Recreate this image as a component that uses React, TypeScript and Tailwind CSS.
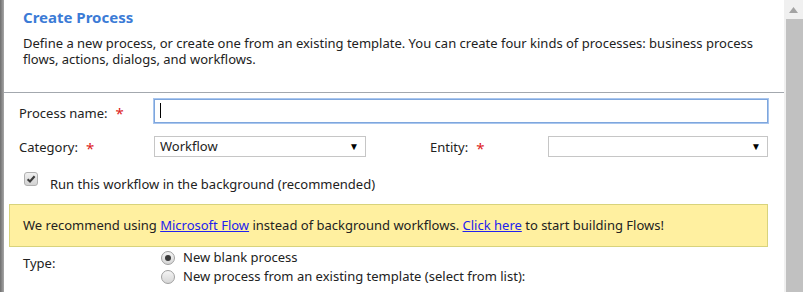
import React from 'react'

const font = { fontFamily: '"Noto Sans", "Open Sans", sans-serif' }

// Required-field marker
const Req = () => <span className="ml-[8px] text-[#d22] text-[15px] leading-none">*</span>

const SelectBox = ({ value, className }: { value?: string; className: string }) => (
  <div className={`flex items-center justify-between border border-[#c6c6c6] bg-white pl-[5px] pr-[6px] h-[21px] ${className}`}>
    <span className="text-[13px] text-[#222]">{value}</span>
    <span className="text-[10px] text-black">▼</span>
  </div>
)

export default function App() {
  return (
    <div className="w-[803px] h-[292px] flex bg-white overflow-hidden text-[#222]" style={font}>
      {/* dim page edge behind the dialog */}
      <div className="w-[4px] h-full bg-gradient-to-r from-[#6e6e6e] to-[#a8a8a8]" />

      <div className="flex-1 flex flex-col">
        {/* Header */}
        <div className="pl-[19px] pt-[6px] h-[93px] border-b border-[#a3a8ae]">
          <h1 className="text-[15px] font-bold text-[#3b7bd6] leading-[22px]">Create Process</h1>
          <p className="mt-[7px] text-[13px] leading-[16px] pr-[20px]">
            Define a new process, or create one from an existing template. You can create four kinds of processes: business process flows, actions, dialogs, and workflows.
          </p>
        </div>

        {/* Form */}
        <div className="pl-[15px] pr-[16px] pt-[6px] flex flex-col text-[13px]">
          <div className="flex items-center h-[23px]">
            <div className="w-[135px] flex items-center mt-[6px]">
              Process name:<Req />
            </div>
            <div className="flex-1 h-[24px] border border-[#7ea6dd] shadow-[0_0_0_1px_#a9c6ee] flex items-center pl-[5px]">
              <span className="w-px h-[15px] bg-black" />
            </div>
          </div>

          <div className="flex items-center h-[21px] mt-[14px]">
            <div className="w-[135px] flex items-center mt-[3px]">
              Category:<Req />
            </div>
            <SelectBox value="Workflow" className="w-[212px]" />
            <div className="w-[182px] pl-[64px] flex items-center mt-[3px]">
              Entity:<Req />
            </div>
            <SelectBox className="flex-1" />
          </div>

          <label className="flex items-start mt-[15px] ml-[5px]">
            <span className="w-[14px] h-[14px] rounded-[3px] border border-[#b0b0b0] bg-gradient-to-b from-[#f0f0f0] to-[#d2d2d2] flex items-center justify-center">
              <svg width="10" height="10" viewBox="0 0 10 10">
                <path d="M1.6 5.2 L4 7.5 L8.6 2.2" fill="none" stroke="#3c3c3c" strokeWidth="2.1" />
              </svg>
            </span>
            <span className="ml-[12px] mt-[3px] leading-[18px]">Run this workflow in the background (recommended)</span>
          </label>
        </div>

        <div className="ml-[5px] mr-[16px] mt-[11px] h-[43px] bg-[#fff0a0] border border-[#d8d37c] flex items-center pl-[13px] text-[13px]">
          <span>
            We recommend using <a className="text-[#2222ee] underline">Microsoft Flow</a> instead of background workflows.{' '}
            <a className="text-[#2222ee] underline">Click here</a> to start building Flows!
          </span>
        </div>

        <div className="flex pl-[19px] pt-[1px] text-[13px]">
          <div className="w-[138px] pt-[6px]">Type:</div>
          <div className="flex flex-col">
            {[
              { label: 'New blank process', on: true },
              { label: 'New process from an existing template (select from list):', on: false },
            ].map((r) => (
              <div key={r.label} className="flex items-center h-[19px]">
                <span className="w-[14px] h-[14px] rounded-full border border-[#a0a0a0] bg-gradient-to-b from-[#f4f4f4] to-[#d6d6d6] flex items-center justify-center">
                  {r.on && <span className="w-[6px] h-[6px] rounded-full bg-[#3a3a3a]" />}
                </span>
                <span className="ml-[8px]">{r.label}</span>
              </div>
            ))}
          </div>
        </div>
      </div>

      {/* Scrollbar */}
      <div className="w-[19px] h-full flex flex-col bg-[#f0f0f0]">
        <div className="h-[19px] flex items-center justify-center">
          <svg width="9" height="6" viewBox="0 0 9 6">
            <path d="M0 6 L4.5 0 L9 6 Z" fill="#a3a3a3" />
          </svg>
        </div>
        <div className="flex-1 ml-[2px] bg-[#c1c1c1]" />
      </div>
    </div>
  )
}
